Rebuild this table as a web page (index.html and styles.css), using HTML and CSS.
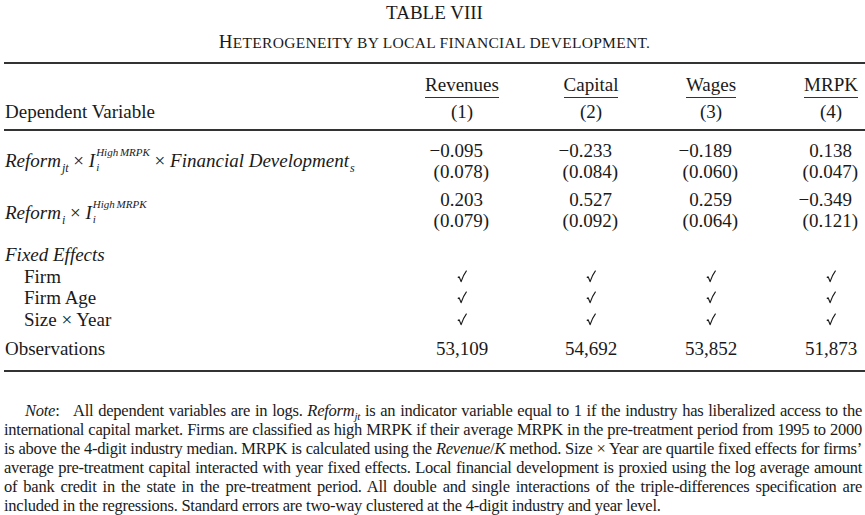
FILE: index.html
```html
<!DOCTYPE html>
<html lang="en">
<head>
  <meta charset="UTF-8" />
  <meta name="viewport" content="width=device-width, initial-scale=1.0"/>
  <title>Table VIII</title>
  <link rel="stylesheet" href="styles.css">
</head>
<body>

  <svg class="defs" width="0" height="0">
    <symbol id="chk" viewBox="0 0 10 13">
      <path d="M0.8 7.6 L2.2 6.9 L4.1 11.6 Q6.2 5.2 9.6 0.6" fill="none" stroke="#1a1a1a" stroke-width="1.2" stroke-linejoin="round"/>
    </symbol>
  </svg>

  <div class="page">
    <h1 class="title">TABLE VIII</h1>
    <h2 class="subtitle"><span class="cap">H</span>ETEROGENEITY BY LOCAL FINANCIAL DEVELOPMENT.</h2>

    <div class="table">
      <div class="thead">
        <div class="row">
          <div class="label"></div>
          <div class="cell"><span class="c mid"><span class="ul">Revenues</span></span></div>
          <div class="cell"><span class="c mid"><span class="ul">Capital</span></span></div>
          <div class="cell"><span class="c mid"><span class="ul">Wages</span></span></div>
          <div class="cell"><span class="c mid"><span class="ul">MRPK</span></span></div>
        </div>
        <div class="row row-num">
          <div class="label">Dependent Variable</div>
          <div class="cell"><span class="c mid">(1)</span></div>
          <div class="cell"><span class="c mid">(2)</span></div>
          <div class="cell"><span class="c mid">(3)</span></div>
          <div class="cell"><span class="c mid">(4)</span></div>
        </div>
      </div>

      <div class="tbody">
        <div class="row reg">
          <div class="label formula">
            <i>Reform</i><span class="sb">jt</span> × <i>I</i><span class="ss"><span>High MRPK</span><span>i</span></span> × <i>Financial Development</i><span class="sb">s</span>
          </div>
          <div class="cell stack"><span class="c">−0.095</span><span class="c">(0.078<span class="cp">)</span></span></div>
          <div class="cell stack"><span class="c">−0.233</span><span class="c">(0.084<span class="cp">)</span></span></div>
          <div class="cell stack"><span class="c">−0.189</span><span class="c">(0.060<span class="cp">)</span></span></div>
          <div class="cell stack"><span class="c">0.138</span><span class="c">(0.047<span class="cp">)</span></span></div>
        </div>
        <div class="row reg reg-2">
          <div class="label formula">
            <i>Reform</i><span class="sb">i</span> × <i>I</i><span class="ss"><span>High MRPK</span><span>i</span></span>
          </div>
          <div class="cell stack"><span class="c">0.203</span><span class="c">(0.079<span class="cp">)</span></span></div>
          <div class="cell stack"><span class="c">0.527</span><span class="c">(0.092<span class="cp">)</span></span></div>
          <div class="cell stack"><span class="c">0.259</span><span class="c">(0.064<span class="cp">)</span></span></div>
          <div class="cell stack"><span class="c">−0.349</span><span class="c">(0.121<span class="cp">)</span></span></div>
        </div>

        <div class="fixed">
          <div class="row">
            <div class="label"><i>Fixed Effects</i></div>
          </div>
          <div class="row">
            <div class="label sub">Firm</div>
            <div class="cell"><span class="c mid"><svg class="tick"><use href="#chk"/></svg></span></div>
            <div class="cell"><span class="c mid"><svg class="tick"><use href="#chk"/></svg></span></div>
            <div class="cell"><span class="c mid"><svg class="tick"><use href="#chk"/></svg></span></div>
            <div class="cell"><span class="c mid"><svg class="tick"><use href="#chk"/></svg></span></div>
          </div>
          <div class="row">
            <div class="label sub">Firm Age</div>
            <div class="cell"><span class="c mid"><svg class="tick"><use href="#chk"/></svg></span></div>
            <div class="cell"><span class="c mid"><svg class="tick"><use href="#chk"/></svg></span></div>
            <div class="cell"><span class="c mid"><svg class="tick"><use href="#chk"/></svg></span></div>
            <div class="cell"><span class="c mid"><svg class="tick"><use href="#chk"/></svg></span></div>
          </div>
          <div class="row">
            <div class="label sub">Size × Year</div>
            <div class="cell"><span class="c mid"><svg class="tick"><use href="#chk"/></svg></span></div>
            <div class="cell"><span class="c mid"><svg class="tick"><use href="#chk"/></svg></span></div>
            <div class="cell"><span class="c mid"><svg class="tick"><use href="#chk"/></svg></span></div>
            <div class="cell"><span class="c mid"><svg class="tick"><use href="#chk"/></svg></span></div>
          </div>
        </div>

        <div class="row obs">
          <div class="label">Observations</div>
          <div class="cell"><span class="c mid">53,109</span></div>
          <div class="cell"><span class="c mid">54,692</span></div>
          <div class="cell"><span class="c mid">53,852</span></div>
          <div class="cell"><span class="c mid">51,873</span></div>
        </div>
      </div>
    </div>

    <p class="note">
      <i>Note</i>:&nbsp;&nbsp; All dependent variables are in logs. <i>Reform</i><span class="sb-note">jt</span> is an indicator variable equal to 1 if the industry has liberalized access to the international capital market. Firms are classified as high MRPK if their average MRPK in the pre-treatment period from 1995 to 2000 is above the 4-digit industry median. MRPK is calculated using the <i>Revenue</i>/<i>K</i> method. Size × Year are quartile fixed effects for firms’ average pre-treatment capital interacted with year fixed effects. Local financial development is proxied using the log average amount of bank credit in the state in the pre-treatment period. All double and single interactions of the triple-differences specification are included in the regressions. Standard errors are two-way clustered at the 4-digit industry and year level.
    </p>
  </div>

</body>
</html>
```

FILE: styles.css
```css
* {
  margin: 0;
  padding: 0;
  box-sizing: border-box;
}

body {
  font-family: "Liberation Serif", "Times New Roman", serif;
  color: #1a1a1a;
  background-color: white;
  overflow: hidden;
}

.defs {
  position: absolute;
}

.page {
  width: 865px;
  padding: 2px 0 0 4px;
}

.title,
.subtitle {
  font-size: 19px;
  font-weight: normal;
  line-height: 22px;
  text-align: center;
}

.subtitle {
  font-size: 15.5px;
  margin-top: 7px;
  letter-spacing: 0.3px;
}

.subtitle .cap {
  font-size: 19px;
}

/* table */

.table {
  margin-top: 8px;
  border-top: 2px solid #333;
  border-bottom: 2px solid #333;
}

.thead {
  padding: 10px 0 7px;
  border-bottom: 2px solid #333;
}

.row {
  display: grid;
  grid-template-columns: 1fr 120px 129px 120px 120px;
  font-size: 19px;
  line-height: 21px;
}

.row-num {
  margin-top: 3px;
}

.label {
  padding-left: 1px;
  white-space: nowrap;
}

.label.sub {
  padding-left: 20px;
}

.cell {
  display: flex;
  justify-content: flex-end;
  padding-right: 13px;
}

.cell.stack {
  flex-direction: column;
  align-items: flex-end;
}

.c {
  width: 42px;
  display: flex;
  justify-content: flex-end;
  white-space: nowrap;
}

.c.mid {
  justify-content: center;
  align-items: center;
}

.cp {
  margin-right: -6px;
}

.ul {
  display: block;
  border-bottom: 1.5px solid #333;
  padding-bottom: 2px;
}

.tbody {
  padding: 9px 0 11px;
}

.reg-2 {
  margin-top: 6px;
}

.formula {
  align-self: center;
  padding-top: 2px;
}

.reg-2 .formula {
  padding-top: 9px;
}

.sb {
  font-style: italic;
  font-size: 12px;
  vertical-align: -5px;
  margin-left: 1px;
}

.ss {
  display: inline-flex;
  flex-direction: column;
  font-style: italic;
  font-size: 11px;
  line-height: 15px;
  vertical-align: 11px;
  margin-left: 1px;
  word-spacing: -1px;
}

.fixed {
  margin-top: 13px;
}

.fixed .row {
  line-height: 21.5px;
}

.tick {
  width: 10px;
  height: 13px;
}

.obs {
  margin-top: 8px;
}

/* note */

.note {
  margin-top: 29px;
  padding-right: 3px;
  font-size: 16.5px;
  line-height: 19px;
  letter-spacing: -0.25px;
  text-align: justify;
  text-indent: 21px;
}

.sb-note {
  font-style: italic;
  font-size: 11px;
  line-height: 0;
  vertical-align: -4px;
}
```
